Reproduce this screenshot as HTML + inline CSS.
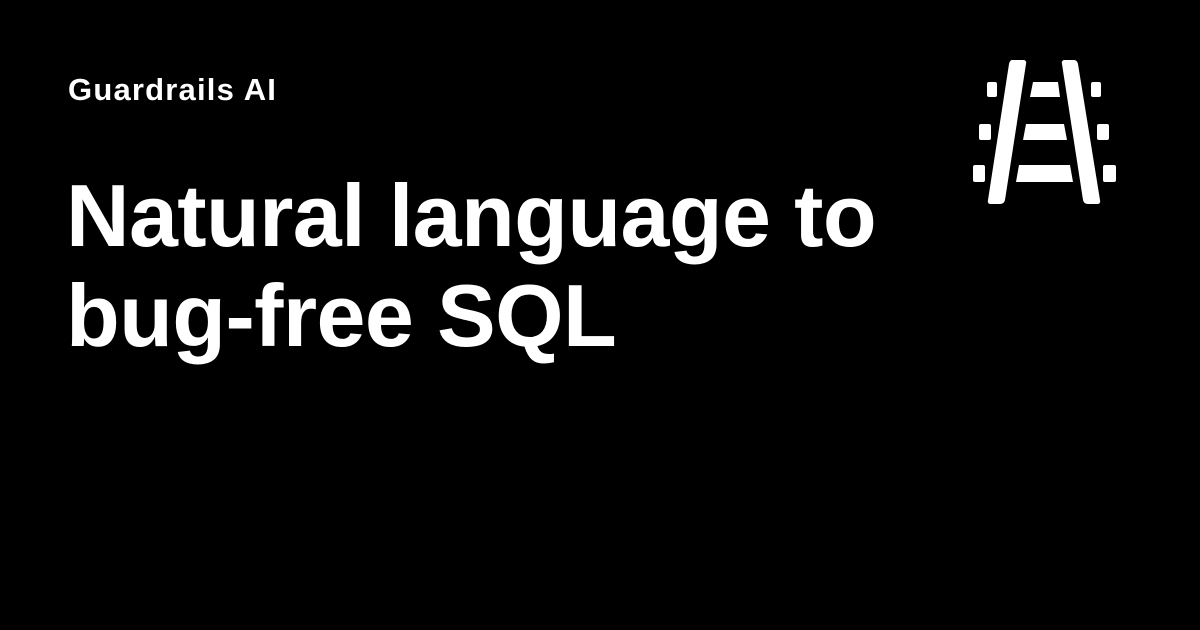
<!DOCTYPE html>
<html><head><meta charset="utf-8"><style>
html,body{margin:0;padding:0;background:#000;width:1200px;height:630px;overflow:hidden}
body{position:relative;font-family:"Liberation Sans",Arial,sans-serif;color:#fff;font-weight:bold}
.brand{position:absolute;left:68px;top:70px;font-size:31px;line-height:40px;letter-spacing:1.2px}
.title{position:absolute;left:66px;top:166px;font-size:88px;line-height:100px;letter-spacing:-0.6px}
svg{position:absolute;left:0;top:0}
</style></head><body>
<div class="brand">Guardrails AI</div>
<div class="title">Natural language to<br>bug-free SQL</div>
<svg width="1200" height="630" viewBox="0 0 1200 630">
<g fill="#fff">
<path d="M1012 60 L1023 60 Q1027 60 1026 64 L1005 200 Q1004 204 1000 204 L991 204 Q987 204 988 200 L1009 64 Q1010 60 1012 60Z"/>
<path d="M1065 60 L1074 60 Q1077 60 1078 64 L1100 200 Q1101 204 1097 204 L1088 204 Q1084 204 1083 200 L1062 64 Q1061 60 1065 60Z"/>
<path d="M1033 82 L1058 82 L1060 97 L1030 97Z"/>
<path d="M1026 124 L1064 124 L1067 140 L1023 140Z"/>
<path d="M1019 165 L1070 165 L1073 182 L1016 182Z"/>
<rect x="987" y="82" width="10" height="15" rx="2"/>
<rect x="1091" y="82" width="10" height="15" rx="2"/>
<rect x="979" y="124" width="12" height="16" rx="2"/>
<rect x="1097" y="124" width="12" height="16" rx="2"/>
<rect x="973" y="165" width="12" height="17" rx="2"/>
<rect x="1103" y="165" width="13" height="17" rx="2"/>
</g></svg>
</body></html>
